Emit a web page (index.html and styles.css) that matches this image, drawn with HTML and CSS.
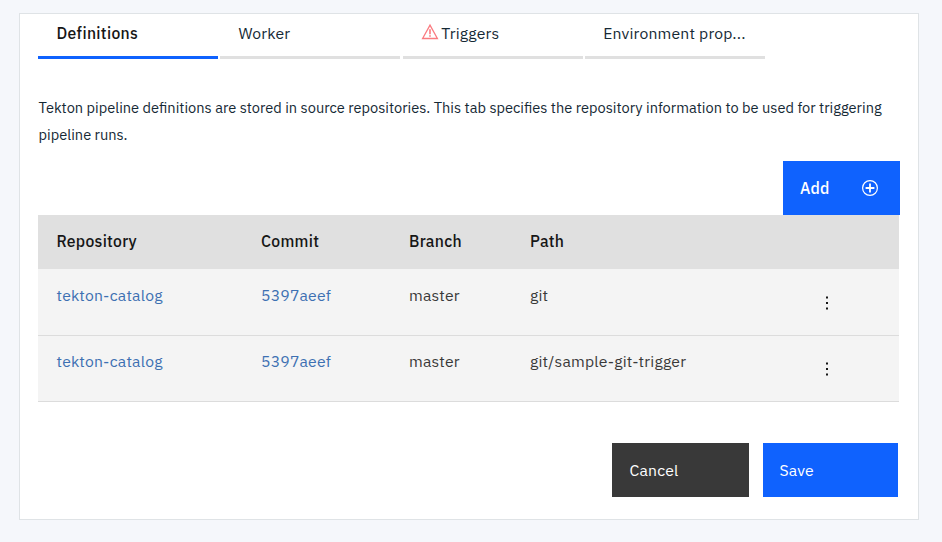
FILE: index.html
```html
<!DOCTYPE html>
<html lang="en">
<head>
<meta charset="utf-8">
<title>Pipeline definitions</title>
<link rel="stylesheet" href="styles.css">
</head>
<body>
<main class="card">
  <nav class="tabs">
    <a class="tab tab-active">Definitions</a>
    <a class="tab">Worker</a>
    <a class="tab tab-alert"><svg class="warning" width="18" height="18" viewBox="0 0 18 18" fill="none" stroke="#fa7b80"><path d="M9 2.1 16.4 15.5H1.6Z" stroke-width="1.3"/><path d="M9 6.2v5M9 12.2v1.6" stroke-width="1.6"/></svg>Triggers</a>
    <a class="tab">Environment prop...</a>
  </nav>
  <p class="intro">Tekton pipeline definitions are stored in source repositories. This tab specifies the repository information to be used for triggering<br>pipeline runs.</p>
  <div class="toolbar">
    <button class="btn btn-add">Add<svg width="18" height="18" viewBox="0 0 18 18" fill="none" stroke="#fff"><circle cx="9" cy="9" r="7.4" stroke-width="1.2"/><path d="M9 4.6v8.8M4.6 9h8.8" stroke-width="1.8"/></svg></button>
  </div>
  <div class="table">
    <div class="row head"><span>Repository</span><span>Commit</span><span>Branch</span><span>Path</span></div>
    <div class="row"><a>tekton-catalog</a><a>5397aeef</a><span>master</span><span>git</span><svg class="menu" width="18" height="18" viewBox="0 0 18 18" fill="#161616"><rect x="8" y="2.5" width="2" height="2"/><rect x="8" y="8" width="2" height="2"/><rect x="8" y="13.5" width="2" height="2"/></svg></div>
    <div class="row"><a>tekton-catalog</a><a>5397aeef</a><span>master</span><span>git/sample-git-trigger</span><svg class="menu" width="18" height="18" viewBox="0 0 18 18" fill="#161616"><rect x="8" y="2.5" width="2" height="2"/><rect x="8" y="8" width="2" height="2"/><rect x="8" y="13.5" width="2" height="2"/></svg></div>
  </div>
  <footer class="actions">
    <button class="btn btn-cancel">Cancel</button>
    <button class="btn btn-save">Save</button>
  </footer>
</main>
</body>
</html>
```
FILE: styles.css
```css
* { box-sizing: border-box; }
body {
  margin: 0;
  padding: 13px 0 0 19px;
  height: 542px;
  background: #f5f7fb;
  font-family: "IBM Plex Sans", Roboto, "Liberation Sans", sans-serif;
  font-size: 15.75px;
  letter-spacing: 0.18px;
  color: #152935;
}
.card {
  width: 900px;
  height: 507px;
  padding: 0 18px;
  background: #fff;
  border: 1px solid #dfe3e6;
}
.tabs { display: grid; grid-template-columns: 180px 180px 180px 180px; column-gap: 2.4px; height: 45px; }
.tab {
  height: 45px;
  padding: 7px 18px 0;
  line-height: 24px;
  white-space: nowrap;
  border-bottom: 3px solid #e0e0e0;
}
.tab-active { padding-left: 18.5px; border-color: #0f62fe; color: #161616; font-weight: 500; letter-spacing: 0.32px; }
.tab-alert { display: flex; gap: 2.5px; }
.warning { margin-top: 2px; }
.intro { margin: 35px 0 0 0.6px; font-size: 14.62px; letter-spacing: 0; line-height: 27px; white-space: nowrap; }
.toolbar { display: flex; justify-content: flex-end; margin: 13px 0 0; }
.btn {
  display: flex;
  align-items: center;
  height: 54px;
  padding: 0 17px;
  border: 0;
  color: #fff;
  background: #0f62fe;
  font: inherit;
  letter-spacing: inherit;
}
.btn-add { width: 117px; padding-right: 21px; justify-content: space-between; font-weight: 500; }
.table { width: 861px; }
.row {
  display: grid;
  grid-template-columns: 204.5px 148px 121px 287.5px 18px;
  height: 66px;
  padding: 13px 0 0 18.5px;
  line-height: 24px;
  white-space: nowrap;
  background: #f4f4f4;
  border-bottom: 1px solid #dcdcdc;
  color: #393939;
}
.row:nth-child(2) { height: 67px; padding-top: 14px; }
.row.head { height: 54px; background: #e0e0e0; border: 0; color: #161616; font-weight: 500; letter-spacing: 0.27px; padding-top: 14px; }
.row a { color: #3d70b2; }
.menu { margin-top: 11px; }
.actions { display: flex; justify-content: flex-end; gap: 14px; margin: 41px 2px 0 0; }
.btn-cancel { width: 137px; padding-left: 17.5px; background: #393939; }
.btn-save { width: 135px; padding-left: 16.5px; }
```
